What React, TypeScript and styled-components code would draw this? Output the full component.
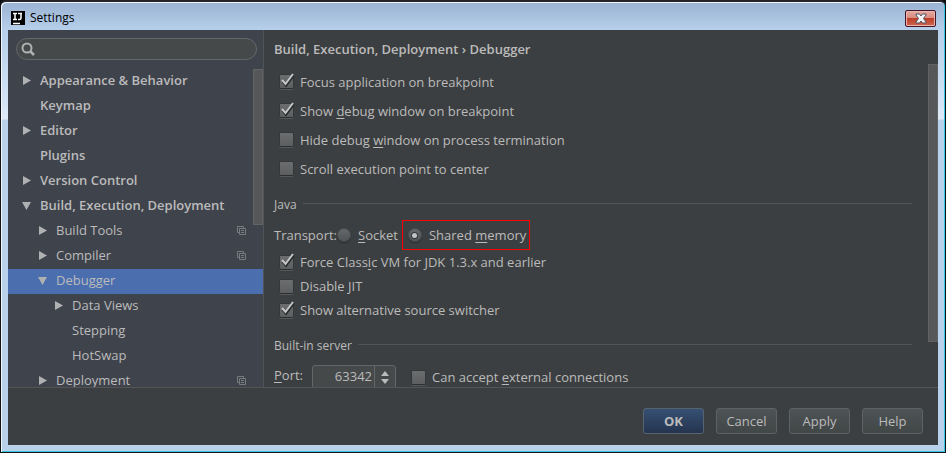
import React, { useState } from 'react';
import styled, { createGlobalStyle, css } from 'styled-components';

const GlobalStyle = createGlobalStyle`
  *, *::before, *::after { box-sizing: border-box; }
  body { margin: 0; background: #0c0d10; }
  button, input { font: inherit; color: inherit; }
`;

const Window = styled.div`
  height: 100vh;
  display: flex;
  flex-direction: column;
  padding: 0 7px 7px;
  border: 1px solid #101418;
  border-top: 2px solid #24252b;
  border-radius: 6px 6px 0 0;
  background: linear-gradient(#9ab3d3 0, #b6cfea 28px, #d4e4f5 100px, #dfebf8 117px, #b9d2ec 118px);
  box-shadow: inset 1px 1px 0 #f4f8fc, inset -1px -1px 0 #35c8e0;
  font-family: 'Open Sans', 'Noto Sans', sans-serif;
  font-size: 13px;
  line-height: 20px;
  color: #bbbbbb;
`;

const TitleBar = styled.header`
  display: flex;
  align-items: center;
  flex: none;
  gap: 5px;
  height: 28px;
  padding: 4px 2px 0 3px;
  color: #000;
`;

const WindowTitle = styled.h1`
  flex: 1;
  margin: 0;
  font-size: 12px;
  font-weight: 400;
`;

const CloseButton = styled.button`
  display: grid;
  place-items: center;
  width: 31px;
  height: 17px;
  padding: 0;
  border: 1px solid #451426;
  border-radius: 2px;
  background: linear-gradient(#e4a99f 0, #d98c7f 46%, #bd3f29 50%, #cf6650 100%);
  box-shadow: inset 0 0 0 1px #e9b5ac;
`;

const Dialog = styled.main`
  flex: 1;
  min-height: 0;
  display: flex;
  flex-direction: column;
  background: #3c3f41;
`;

const Columns = styled.div`
  flex: 1;
  min-height: 0;
  display: flex;
  border-bottom: 1px solid #555555;
`;

const Sidebar = styled.nav`
  flex: none;
  width: 256px;
  display: flex;
  flex-direction: column;
  background: #3f434c;
  border-right: 1px solid #515457;
`;

const SearchBox = styled.label`
  flex: none;
  display: flex;
  align-items: center;
  height: 22px;
  margin: 8px 6px 9px 8px;
  padding: 0 8px 0 4px;
  gap: 4px;
  border: 1px solid #64676a;
  border-radius: 11px;
  background: #45494a;
`;

const SearchInput = styled.input`
  flex: 1;
  min-width: 0;
  height: 18px;
  padding: 0;
  border: 0;
  outline: 0;
  background: transparent;
`;

const TreeArea = styled.div`
  flex: 1;
  min-height: 0;
  position: relative;
  overflow: hidden;
`;

const Tree = styled.ul`
  margin: 0;
  padding: 0;
  list-style: none;
`;

const TreeRow = styled.li<{ $depth: number; $selected?: boolean }>`
  display: flex;
  align-items: center;
  height: 25px;
  padding: 0 17px 2px ${p => 13 + p.$depth * 16}px;
  background: ${p => (p.$selected ? '#4b6eaf' : 'transparent')};
`;

const TreeButton = styled.button<{ $bold?: boolean }>`
  flex: 1;
  display: flex;
  align-items: center;
  height: 22px;
  gap: 8px;
  padding: 0 0 2px;
  border: 0;
  background: none;
  text-align: left;
  line-height: 20px;
  font-weight: ${p => (p.$bold ? 600 : 400)};
`;

const ArrowSlot = styled.span`
  display: grid;
  place-items: center;
  width: 11px;
  height: 12px;
  padding-top: 2px;
`;

const ScrollThumb = styled.div<{ $top: number; $height: string }>`
  position: absolute;
  right: 0;
  top: ${p => p.$top}px;
  width: 10px;
  height: ${p => p.$height};
  border: 1px solid #616365;
  background: #555759;
`;

const Content = styled.section`
  flex: 1;
  min-width: 0;
  position: relative;
  overflow: hidden;
  padding: 0 26px 0 10px;
`;

const Heading = styled.h2`
  height: 37px;
  margin: 0;
  font-size: 13px;
  line-height: 38px;
  font-weight: 600;
`;

const Group = styled.div<{ $gap: number }>`
  margin-top: ${p => p.$gap}px;
`;

const GroupTitle = styled.h3`
  display: flex;
  align-items: center;
  gap: 6px;
  height: 22px;
  margin: 0;
  font-size: 12px;
  font-weight: 400;
  &::after {
    content: '';
    flex: 1;
    height: 1px;
    margin-bottom: 3px;
    background: #515457;
  }
`;

const Option = styled.label<{ $height: number }>`
  display: flex;
  align-items: center;
  gap: 6px;
  height: ${p => p.$height}px;
  padding-left: 5px;
`;

const BoxSlot = styled.span`
  position: relative;
  width: 15px;
  height: 18px;
  display: flex;
  align-items: center;
`;

const CheckInput = styled.input`
  appearance: none;
  width: 15px;
  height: 15px;
  margin: 0;
  border: 1px solid #353839;
  border-bottom-color: #2c2e2f;
  border-radius: 2px;
  background: linear-gradient(#6c6d6e, #5c5e5f);
  box-shadow: 0 1px 0 #55585a;
`;

const Tick = styled.svg`
  position: absolute;
  left: 1px;
  top: 0;
  pointer-events: none;
`;

const Mnemonic = styled.span`
  text-decoration: underline;
  text-decoration-thickness: 1px;
  text-underline-offset: 2px;
`;

const TransportRow = styled.div`
  display: flex;
  align-items: center;
  height: 30px;
  margin-top: 4px;
`;

const RadioLabel = styled.label<{ $marked?: boolean }>`
  display: flex;
  align-items: center;
  height: 30px;
  gap: 7px;
  padding: 0 4px 0 0;
  ${p => p.$marked && css`
    padding: 0 3px 0 5px;
    border: 1px solid #ff0000;
  `}
`;

const RadioInput = styled.input`
  appearance: none;
  display: grid;
  place-items: center;
  width: 14px;
  height: 14px;
  margin: 0;
  border: 1px solid #4a4d4f;
  border-radius: 50%;
  background: linear-gradient(#65686a, #505355);
  box-shadow: 0 1px 1px #292b2c;
  &:checked::before {
    content: '';
    width: 5px;
    height: 5px;
    border-radius: 50%;
    background: #c2c4c5;
    box-shadow: 0 0 0 1px #37393a;
  }
`;

const PortRow = styled.div`
  display: flex;
  align-items: flex-start;
  margin-top: 8px;
`;

const PortLabel = styled.label`
  width: 38px;
`;

const Spinner = styled.div`
  display: flex;
  width: 84px;
  height: 24px;
  margin-right: 10px;
  border: 1px solid #646667;
  border-radius: 3px;
  background: #45494a;
`;

const PortInput = styled.input`
  flex: 1;
  min-width: 0;
  padding: 0 2px 2px;
  border: 0;
  border-right: 1px solid #646667;
  background: none;
  text-align: right;
`;

const Steps = styled.div`
  display: flex;
  flex-direction: column;
  width: 20px;
  padding-top: 3px;
`;

const StepButton = styled.button`
  display: grid;
  place-items: center;
  height: 8px;
  padding: 0;
  border: 0;
  background: none;
`;

const Footer = styled.footer`
  flex: none;
  display: flex;
  justify-content: flex-end;
  align-items: flex-start;
  gap: 12px;
  height: 57px;
  padding: 20px 15px 0;
`;

const PushButton = styled.button<{ $primary?: boolean }>`
  width: 61px;
  height: 26px;
  padding: 0 0 1px;
  border: 1px solid #5e6264;
  border-radius: 3px;
  background: linear-gradient(#4e5355, #414647);
  ${p => p.$primary && css`
    border-color: #566370;
    background: linear-gradient(#365072, #25344f);
    font-weight: 700;
  `}
`;

const Arrow = ({ open }: { open: boolean }) => (
  <svg width="9" height="9" viewBox="0 0 9 9" fill="#afb1b3" aria-hidden="true">
    <path d={open ? 'M0 1h9L4.5 9z' : 'M1 0l8 4.5L1 9z'} />
  </svg>
);

const CopyIcon = () => (
  <svg width="9" height="9" viewBox="0 0 9 9" fill="none" stroke="#777b80" aria-hidden="true">
    <path d="M2 6.500H.5v-6h6V2M2.500 2.500h6v6h-6zM4 4.500h3M4 6.500h3" />
  </svg>
);

type CheckProps = { on?: boolean; height: number; children: React.ReactNode };

const CheckOption = ({ on = false, height, children }: CheckProps) => {
  const [checked, setChecked] = useState(on);
  return (
    <Option $height={height}>
      <BoxSlot>
        <CheckInput type="checkbox" checked={checked} onChange={e => setChecked(e.target.checked)} />
        {checked && (
          <Tick width="15" height="16" viewBox="0 0 15 16" fill="none" aria-hidden="true">
            <path d="M2.500 8.500L6 12.500L13.500 2.500" stroke="#292b2c" strokeWidth="2.500" />
            <path d="M2 7L5.500 11L13 1" stroke="#c4c5c6" strokeWidth="2" />
          </Tick>
        )}
      </BoxSlot>
      <span>{children}</span>
    </Option>
  );
};

type Node = { name: string; depth: number; open?: boolean; bold?: boolean; copy?: boolean; selected?: boolean };

const nodes: Node[] = [
  { name: 'Appearance & Behavior', depth: 0, open: false, bold: true },
  { name: 'Keymap', depth: 0, bold: true },
  { name: 'Editor', depth: 0, open: false, bold: true },
  { name: 'Plugins', depth: 0, bold: true },
  { name: 'Version Control', depth: 0, open: false, bold: true },
  { name: 'Build, Execution, Deployment', depth: 0, open: true, bold: true },
  { name: 'Build Tools', depth: 1, open: false, copy: true },
  { name: 'Compiler', depth: 1, open: false, copy: true },
  { name: 'Debugger', depth: 1, open: true, selected: true },
  { name: 'Data Views', depth: 2, open: false },
  { name: 'Stepping', depth: 2 },
  { name: 'HotSwap', depth: 2 },
  { name: 'Deployment', depth: 1, open: false, copy: true },
];

export default function App() {
  const [transport, setTransport] = useState('memory');
  const [port, setPort] = useState(63342);
  return (
    <>
      <GlobalStyle />
      <Window>
        <TitleBar>
          <svg width="14" height="14" viewBox="0 0 14 14" aria-hidden="true">
            <path d="M0 0h14v14H0z" fill="#000" />
            <path d="M2 2.500h4M4 2v6M2 8.500h4M7 2.500h4M10 2v5q0 1.500-1.500 1.500H7M2 12.500h7" fill="none" stroke="#fff" strokeWidth="1.500" />
          </svg>
          <WindowTitle>Settings</WindowTitle>
          <CloseButton aria-label="Close">
            <svg width="12" height="11" viewBox="0 0 12 11" aria-hidden="true">
              <path d="M1 1h3.500L6 3l1.500-2H11v1L8.500 5.500 11 9v1H7.500L6 8l-1.500 2H1V9l2.500-3.500L1 2z" fill="#f4f4f6" stroke="#4c5364" />
            </svg>
          </CloseButton>
        </TitleBar>
        <Dialog>
          <Columns>
            <Sidebar>
              <SearchBox>
                <svg width="15" height="15" viewBox="0 0 15 15" fill="none" stroke="#afb1b3" aria-hidden="true">
                  <circle cx="6" cy="6" r="4.500" strokeWidth="2" />
                  <path d="M9 9l4 4" strokeWidth="2.500" />
                </svg>
                <SearchInput type="text" aria-label="Search settings" />
              </SearchBox>
              <TreeArea>
                <Tree>
                  {nodes.map(n => (
                    <TreeRow key={n.name} $depth={n.depth} $selected={n.selected}>
                      <TreeButton $bold={n.bold}>
                        <ArrowSlot>{n.open !== undefined && <Arrow open={n.open} />}</ArrowSlot>
                        {n.name}
                      </TreeButton>
                      {n.copy && <CopyIcon />}
                    </TreeRow>
                  ))}
                </Tree>
                <ScrollThumb $top={0} $height="49%" />
              </TreeArea>
            </Sidebar>
            <Content>
              <Heading>Build, Execution, Deployment › Debugger</Heading>
              <CheckOption on height={29}>Focus application on breakpoint</CheckOption>
              <CheckOption on height={29}>Show <Mnemonic>d</Mnemonic>ebug window on breakpoint</CheckOption>
              <CheckOption height={29}>Hide debug <Mnemonic>w</Mnemonic>indow on process termination</CheckOption>
              <CheckOption height={29}>Scroll execution point to center</CheckOption>
              <Group $gap={11}>
                <GroupTitle>Java</GroupTitle>
                <TransportRow>
                  <span>Transport:</span>
                  <RadioLabel>
                    <RadioInput type="radio" name="transport" checked={transport === 'socket'} onChange={() => setTransport('socket')} />
                    <span><Mnemonic>S</Mnemonic>ocket</span>
                  </RadioLabel>
                  <RadioLabel $marked>
                    <RadioInput type="radio" name="transport" checked={transport === 'memory'} onChange={() => setTransport('memory')} />
                    <span>Shared <Mnemonic>m</Mnemonic>emory</span>
                  </RadioLabel>
                </TransportRow>
                <CheckOption on height={24}>Force Class<Mnemonic>i</Mnemonic>c VM for JDK 1.3.x and earlier</CheckOption>
                <CheckOption height={24}>Disable JIT</CheckOption>
                <CheckOption on height={24}>Show alternative source switcher</CheckOption>
              </Group>
              <Group $gap={13}>
                <GroupTitle>Built-in server</GroupTitle>
                <PortRow>
                  <PortLabel htmlFor="port"><Mnemonic>P</Mnemonic>ort:</PortLabel>
                  <Spinner>
                    <PortInput id="port" value={port} onChange={e => setPort(Number(e.target.value) || 0)} />
                    <Steps>
                      <StepButton aria-label="Increase port" onClick={() => setPort(port + 1)}>
                        <svg width="8" height="5" viewBox="0 0 8 5" fill="#bbbbbb"><path d="M0 5h8L4 0z" /></svg>
                      </StepButton>
                      <StepButton aria-label="Decrease port" onClick={() => setPort(port - 1)}>
                        <svg width="8" height="5" viewBox="0 0 8 5" fill="#bbbbbb"><path d="M0 0h8L4 5z" /></svg>
                      </StepButton>
                    </Steps>
                  </Spinner>
                  <CheckOption height={24}>Can accept <Mnemonic>e</Mnemonic>xternal connections</CheckOption>
                </PortRow>
              </Group>
              <ScrollThumb $top={34} $height="78%" />
            </Content>
          </Columns>
          <Footer>
            <PushButton $primary>OK</PushButton>
            <PushButton>Cancel</PushButton>
            <PushButton>Apply</PushButton>
            <PushButton>Help</PushButton>
          </Footer>
        </Dialog>
      </Window>
    </>
  );
}
